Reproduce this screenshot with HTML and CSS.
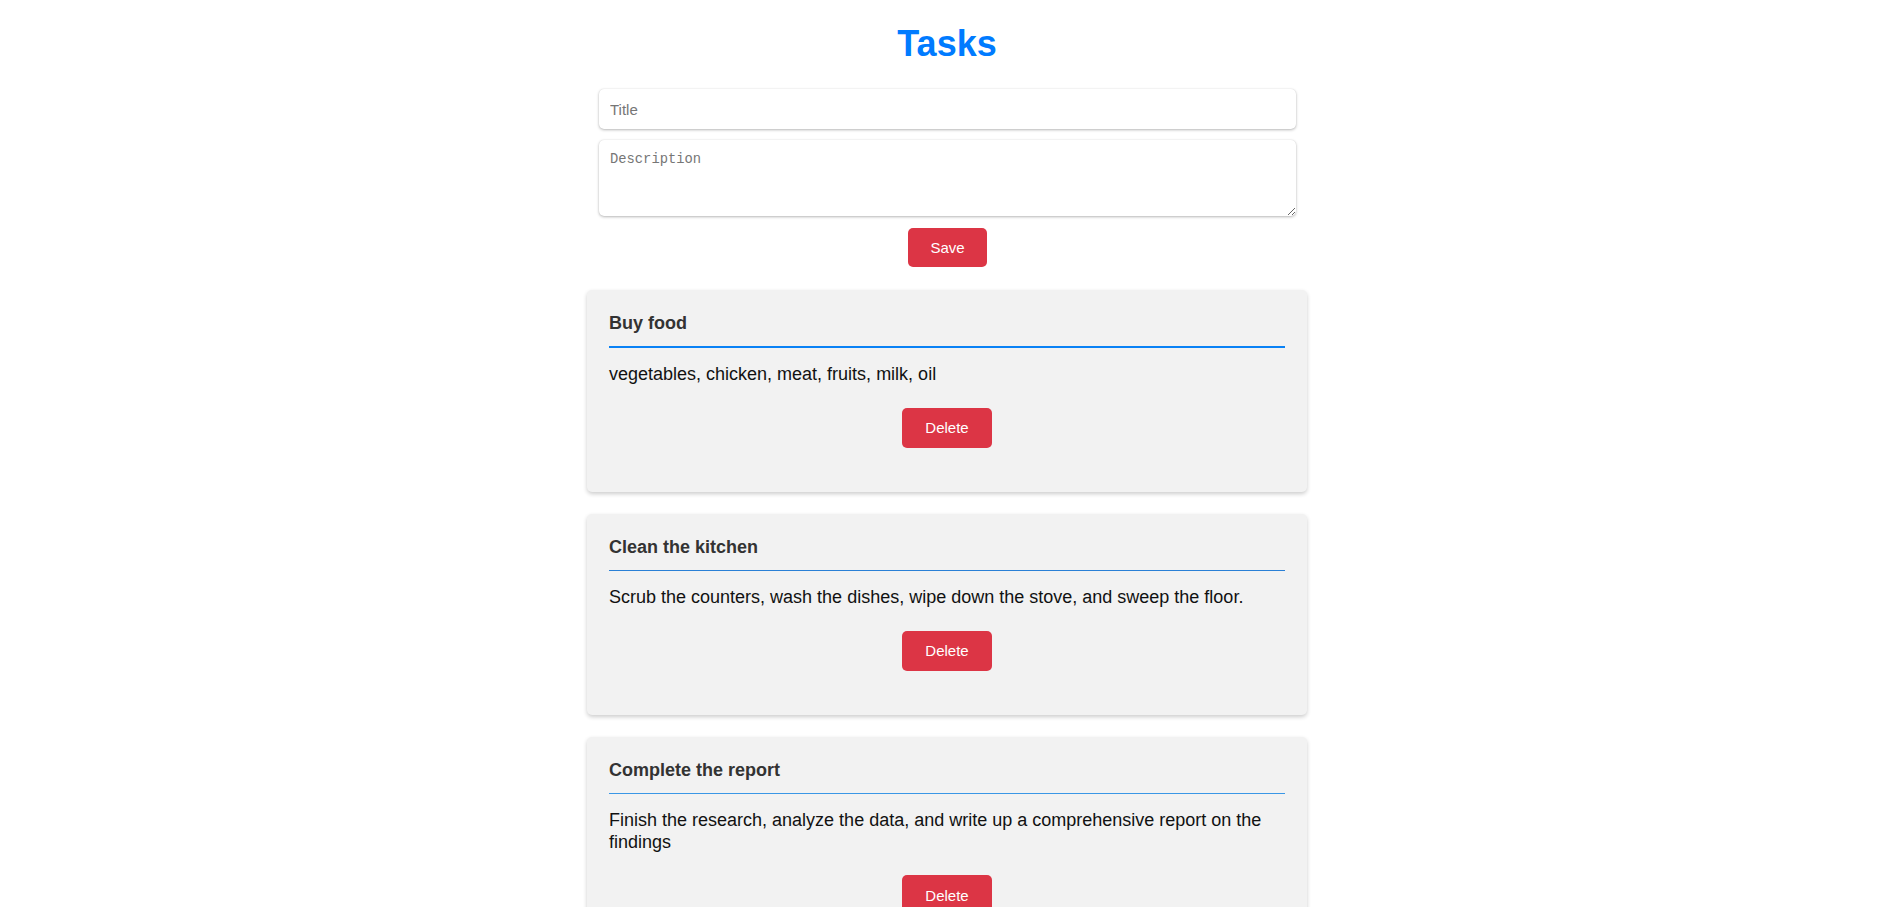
FILE: index.html
```html
<!DOCTYPE html>
<html lang="en">
<head>
<meta charset="utf-8">
<title>Tasks</title>
<link rel="stylesheet" href="styles.css">
</head>
<body>
<main class="container">
  <h1 class="page-title">Tasks</h1>
  <form class="task-form">
    <input class="field field-title" type="text" placeholder="Title">
    <textarea class="field field-desc" placeholder="Description"></textarea>
    <div class="form-actions">
      <button class="btn btn-save" type="button">Save</button>
    </div>
  </form>
  <section class="task-list">
    <article class="task task--accent">
      <h3 class="task-title">Buy food</h3>
      <p class="task-desc">vegetables, chicken, meat, fruits, milk, oil</p>
      <div class="task-actions"><button class="btn btn-delete" type="button">Delete</button></div>
    </article>
    <article class="task">
      <h3 class="task-title">Clean the kitchen</h3>
      <p class="task-desc">Scrub the counters, wash the dishes, wipe down the stove, and sweep the floor.</p>
      <div class="task-actions"><button class="btn btn-delete" type="button">Delete</button></div>
    </article>
    <article class="task task--light">
      <h3 class="task-title">Complete the report</h3>
      <p class="task-desc">Finish the research, analyze the data, and write up a comprehensive report on the findings</p>
      <div class="task-actions"><button class="btn btn-delete" type="button">Delete</button></div>
    </article>
  </section>
</main>
</body>
</html>
```

FILE: styles.css
```css
html, body {
  margin: 0;
  padding: 0;
  background: #ffffff;
}

body {
  font-family: "Liberation Sans", Arial, sans-serif;
  color: #111;
}

.container {
  width: 720px;
  margin: 0 auto;
}

.page-title {
  margin: 23px 0 24px;
  font-size: 36px;
  font-weight: bold;
  line-height: normal;
  text-align: center;
  color: #007bff;
}

.task-form {
  display: flex;
  flex-direction: column;
  padding: 0 11px 0 12px;
}

.field {
  box-sizing: border-box;
  width: 100%;
  border: none;
  border-radius: 5px;
  background: #fff;
  box-shadow: 0 1px 3px rgba(0, 0, 0, 0.28), 0 0 1px rgba(0, 0, 0, 0.12);
  outline: none;
}

.field::placeholder {
  color: #767676;
}

.field-title {
  height: 40px;
  padding: 0 11px;
  font-family: "Liberation Sans", Arial, sans-serif;
  font-size: 15px;
}

.field-desc {
  height: 76px;
  margin-top: 11px;
  padding: 12px 11px;
  font-family: "Liberation Mono", "DejaVu Sans Mono", monospace;
  font-size: 13.8px;
  resize: both;
}

.form-actions {
  display: flex;
  justify-content: center;
  margin-top: 12px;
}

.btn {
  border: none;
  border-radius: 5px;
  background: #dc3545;
  color: #fff;
  font-family: "Liberation Sans", Arial, sans-serif;
  font-size: 15px;
  padding: 0 22px;
  cursor: pointer;
}

.btn-save {
  height: 39px;
  padding: 0 22px;
}

.btn-delete {
  height: 40px;
  padding: 0 23px;
}

.task-list {
  display: flex;
  flex-direction: column;
  gap: 22.5px;
  margin-top: 23px;
}

.task {
  background: #f2f2f2;
  border-radius: 5px;
  box-shadow: 0 2px 4px rgba(0, 0, 0, 0.2);
  padding: 23px 22px 20px;
}

.task-title {
  margin: 0;
  padding-bottom: 12px;
  font-size: 18px;
  font-weight: bold;
  line-height: normal;
  color: #333;
  border-bottom: 1px solid #2a80d6;
}

.task--accent .task-title {
  border-bottom: 2px solid #0a82f5;
}

.task--light .task-title {
  border-bottom-color: #3a97e6;
}

.task-desc {
  margin: 16px 0 18px;
  font-size: 18px;
  line-height: 21.5px;
  color: #111;
}

.task-actions {
  display: flex;
  justify-content: center;
  padding: 4px 0 24px;
}
```
